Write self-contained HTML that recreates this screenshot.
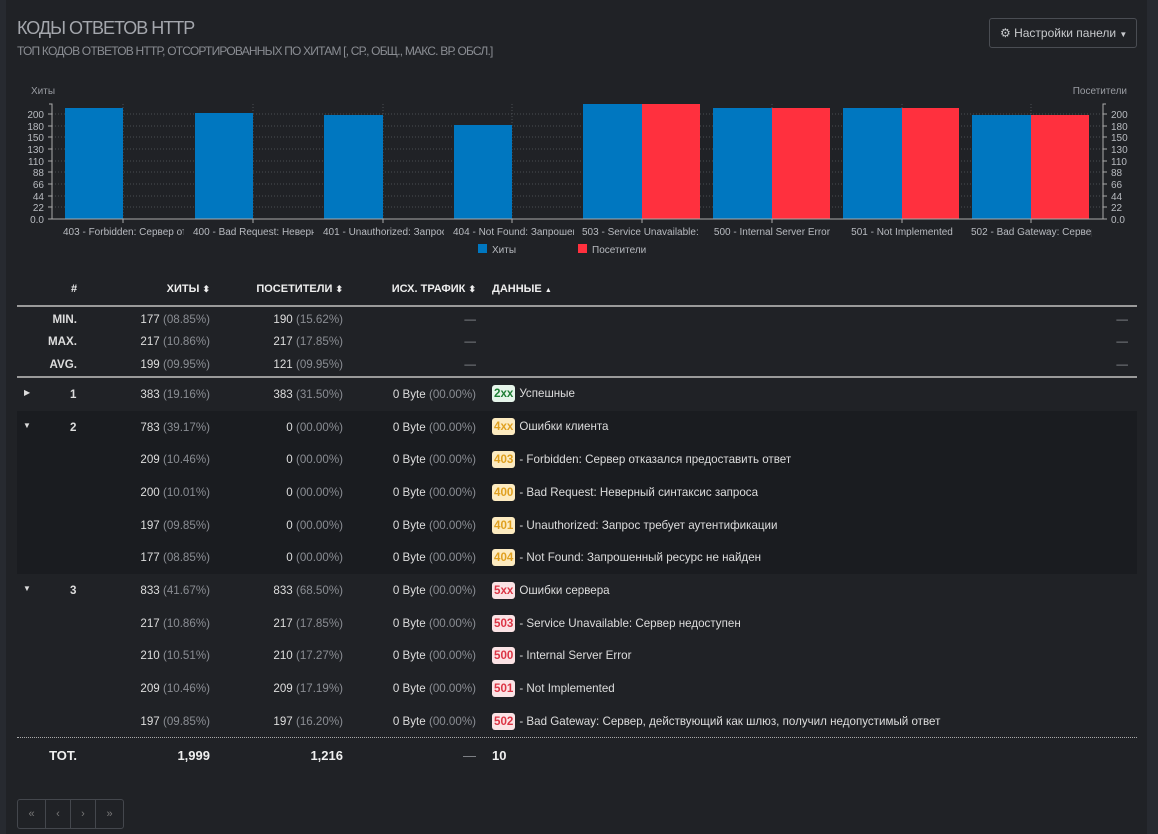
<!DOCTYPE html>
<html><head><meta charset="utf-8"><style>
*{margin:0;padding:0;box-sizing:border-box}
body{width:1158px;height:834px;background:#202226;font-family:"Liberation Sans",sans-serif;color:#ddd;position:relative;overflow:hidden;font-size:11.6px}
.a{position:absolute;white-space:nowrap}
.r{text-align:right}
.g{color:#8a8d93}
.b{font-weight:bold}
.badge{display:inline-block;padding:2px 2px;border-radius:3px;font-weight:bold;font-size:11.6px;line-height:13px;margin-right:4px}
.b2{background:#e6f5ea;color:#1e7e34}
.b4{background:#fdebc0;color:#e0a020}
.b5{background:#fbe3e5;color:#dc3545}
.d{margin-top:1px}
</style></head><body>
<div class="a" style="left:0;top:0;width:6px;height:834px;background:#272a30"></div>
<div class="a" style="left:1147px;top:0;width:11px;height:834px;background:#272a30"></div>
<div class="a" style="left:17px;top:18px;font-size:18px;color:#a4a7ad;letter-spacing:-1px">КОДЫ ОТВЕТОВ HTTP</div>
<div class="a" style="left:17px;top:44px;font-size:12px;color:#8a8d93;letter-spacing:-0.8px">ТОП КОДОВ ОТВЕТОВ HTTP, ОТСОРТИРОВАННЫХ ПО ХИТАМ [, СР., ОБЩ., МАКС. ВР. ОБСЛ.]</div>
<div class="a" style="left:989px;top:18px;width:148px;height:30px;border:1px solid #4a4d53;border-radius:3px;color:#c8cacd;font-size:12px;padding:7px 0 0 10px">&#9881; Настройки панели <span style="font-size:8px">&#9660;</span></div>
<svg class="a" style="left:0;top:0" width="1158" height="270" font-family="Liberation Sans" font-size="10">
<text x="31" y="94" fill="#9a9da3" font-size="10">Хиты</text>
<text x="1127" y="94" fill="#9a9da3" text-anchor="end">Посетители</text>
<g stroke="#4a4d53" stroke-dasharray="1,2">
<line x1="52" x2="1103" y1="114" y2="114"/><line x1="52" x2="1103" y1="126" y2="126"/><line x1="52" x2="1103" y1="137" y2="137"/><line x1="52" x2="1103" y1="149" y2="149"/><line x1="52" x2="1103" y1="161" y2="161"/><line x1="52" x2="1103" y1="172" y2="172"/><line x1="52" x2="1103" y1="184" y2="184"/><line x1="52" x2="1103" y1="196" y2="196"/><line x1="52" x2="1103" y1="207" y2="207"/>
<line x1="123" x2="123" y1="104" y2="219"/><line x1="253" x2="253" y1="104" y2="219"/><line x1="383" x2="383" y1="104" y2="219"/><line x1="512" x2="512" y1="104" y2="219"/><line x1="642" x2="642" y1="104" y2="219"/><line x1="772" x2="772" y1="104" y2="219"/><line x1="902" x2="902" y1="104" y2="219"/><line x1="1031" x2="1031" y1="104" y2="219"/>
</g>
<g fill="#0077c0">
<rect x="65" y="108" width="58" height="111"/><rect x="195" y="113" width="58" height="106"/><rect x="324" y="115" width="59" height="104"/><rect x="454" y="125" width="58" height="94"/>
<rect x="583" y="104" width="59" height="115"/><rect x="713" y="108" width="59" height="111"/><rect x="843" y="108" width="59" height="111"/><rect x="972" y="115" width="59" height="104"/>
</g>
<g fill="#ff303e">
<rect x="642" y="104" width="58" height="115"/><rect x="772" y="108" width="58" height="111"/><rect x="902" y="108" width="57" height="111"/><rect x="1031" y="115" width="58" height="104"/>
</g>
<g stroke="#aaa" fill="none"><path d="M49 104H52V219H1103V104H1106"/></g>
<g stroke="#aaa"><line x1="48" x2="52" y1="114" y2="114"/><line x1="48" x2="52" y1="126" y2="126"/><line x1="48" x2="52" y1="137" y2="137"/><line x1="48" x2="52" y1="149" y2="149"/><line x1="48" x2="52" y1="161" y2="161"/><line x1="48" x2="52" y1="172" y2="172"/><line x1="48" x2="52" y1="184" y2="184"/><line x1="48" x2="52" y1="196" y2="196"/><line x1="48" x2="52" y1="207" y2="207"/><line x1="48" x2="52" y1="219" y2="219"/>
<line x1="1103" x2="1107" y1="114" y2="114"/><line x1="1103" x2="1107" y1="126" y2="126"/><line x1="1103" x2="1107" y1="137" y2="137"/><line x1="1103" x2="1107" y1="149" y2="149"/><line x1="1103" x2="1107" y1="161" y2="161"/><line x1="1103" x2="1107" y1="172" y2="172"/><line x1="1103" x2="1107" y1="184" y2="184"/><line x1="1103" x2="1107" y1="196" y2="196"/><line x1="1103" x2="1107" y1="207" y2="207"/><line x1="1103" x2="1107" y1="219" y2="219"/>
<line x1="123" x2="123" y1="219" y2="223"/><line x1="253" x2="253" y1="219" y2="223"/><line x1="383" x2="383" y1="219" y2="223"/><line x1="512" x2="512" y1="219" y2="223"/><line x1="642" x2="642" y1="219" y2="223"/><line x1="772" x2="772" y1="219" y2="223"/><line x1="902" x2="902" y1="219" y2="223"/><line x1="1031" x2="1031" y1="219" y2="223"/></g>
<g fill="#b8bbc0" text-anchor="end"><text x="44" y="118">200</text><text x="44" y="130">180</text><text x="44" y="141">150</text><text x="44" y="153">130</text><text x="44" y="165">110</text><text x="44" y="176">88</text><text x="44" y="188">66</text><text x="44" y="200">44</text><text x="44" y="211">22</text><text x="44" y="223">0.0</text></g>
<g fill="#b8bbc0"><text x="1111" y="118">200</text><text x="1111" y="130">180</text><text x="1111" y="141">150</text><text x="1111" y="153">130</text><text x="1111" y="165">110</text><text x="1111" y="176">88</text><text x="1111" y="188">66</text><text x="1111" y="200">44</text><text x="1111" y="211">22</text><text x="1111" y="223">0.0</text></g>
<g fill="#b8bbc0">
<svg x="60" y="222" width="124" height="16"><text x="3" y="13">403 - Forbidden: Сервер отказался</text></svg>
<svg x="190" y="222" width="124" height="16"><text x="3" y="13">400 - Bad Request: Неверный</text></svg>
<svg x="320" y="222" width="124" height="16"><text x="3" y="13">401 - Unauthorized: Запрос</text></svg>
<svg x="450" y="222" width="124" height="16"><text x="3" y="13">404 - Not Found: Запрошенный</text></svg>
<svg x="579" y="222" width="121" height="16"><text x="3" y="13">503 - Service Unavailable: Сервер</text></svg>
<text x="772" y="235" text-anchor="middle">500 - Internal Server Error</text>
<text x="902" y="235" text-anchor="middle">501 - Not Implemented</text>
<svg x="968" y="222" width="124" height="16"><text x="3" y="13">502 - Bad Gateway: Сервер</text></svg>
</g>
<rect x="478" y="244" width="9" height="9" fill="#0077c0"/><text x="492" y="253" fill="#b8bbc0">Хиты</text>
<rect x="578" y="244" width="9" height="9" fill="#ff303e"/><text x="592" y="253" fill="#b8bbc0">Посетители</text>
</svg>

<div class="a" style="left:17px;top:411px;width:1120px;height:163px;background:#1a1c20"></div>
<div class="a" style="left:17px;top:305px;width:1120px;height:2px;background:#9a9a9a"></div>
<div class="a" style="left:17px;top:376px;width:1120px;height:2px;background:#9a9a9a"></div>
<div class="a" style="left:17px;top:737px;width:1120px;border-top:1px dotted #aaa"></div>

<div class="a b" style="left:71px;top:283px;color:#eee;font-size:11px">#</div>
<div class="a b r" style="left:100px;width:110px;top:283px;color:#eee;font-size:11px">ХИТЫ <span style="font-size:9px">&#11021;</span></div>
<div class="a b r" style="left:220px;width:123px;top:283px;color:#eee;font-size:11px">ПОСЕТИТЕЛИ <span style="font-size:9px">&#11021;</span></div>
<div class="a b r" style="left:360px;width:116px;top:283px;color:#eee;font-size:11px">ИСХ. ТРАФИК <span style="font-size:9px">&#11021;</span></div>
<div class="a b" style="left:492px;top:283px;color:#eee;font-size:11px">ДАННЫЕ <span style="font-size:7px">&#9650;</span></div>

<div class="a b r" style="left:20px;width:57px;top:313px">MIN.</div>
<div class="a r" style="left:100px;width:110px;top:313px">177 <span class="g">(08.85%)</span></div>
<div class="a r" style="left:220px;width:123px;top:313px">190 <span class="g">(15.62%)</span></div>
<div class="a r g" style="left:400px;width:76px;top:313px">—</div><div class="a r g" style="left:1100px;width:28px;top:313px">—</div>
<div class="a b r" style="left:20px;width:57px;top:335px">MAX.</div>
<div class="a r" style="left:100px;width:110px;top:335px">217 <span class="g">(10.86%)</span></div>
<div class="a r" style="left:220px;width:123px;top:335px">217 <span class="g">(17.85%)</span></div>
<div class="a r g" style="left:400px;width:76px;top:335px">—</div><div class="a r g" style="left:1100px;width:28px;top:335px">—</div>
<div class="a b r" style="left:20px;width:57px;top:358px">AVG.</div>
<div class="a r" style="left:100px;width:110px;top:358px">199 <span class="g">(09.95%)</span></div>
<div class="a r" style="left:220px;width:123px;top:358px">121 <span class="g">(09.95%)</span></div>
<div class="a r g" style="left:400px;width:76px;top:358px">—</div><div class="a r g" style="left:1100px;width:28px;top:358px">—</div>

<div class="a" style="left:24px;top:388px;font-size:8px">&#9654;</div>
<div class="a b" style="left:70px;top:388px">1</div>
<div class="a r" style="left:100px;width:110px;top:388px">383 <span class="g">(19.16%)</span></div>
<div class="a r" style="left:220px;width:123px;top:388px">383 <span class="g">(31.50%)</span></div>
<div class="a r" style="left:360px;width:116px;top:388px">0 Byte <span class="g">(00.00%)</span></div>
<div class="a" style="left:492px;top:385px"><span class="badge b2">2xx</span>Успешные</div>

<div class="a" style="left:23px;top:421px;font-size:8px">&#9660;</div>
<div class="a b" style="left:70px;top:421px">2</div>
<div class="a r" style="left:100px;width:110px;top:421px">783 <span class="g">(39.17%)</span></div>
<div class="a r" style="left:220px;width:123px;top:421px">0 <span class="g">(00.00%)</span></div>
<div class="a r" style="left:360px;width:116px;top:421px">0 Byte <span class="g">(00.00%)</span></div>
<div class="a" style="left:492px;top:418px"><span class="badge b4">4xx</span>Ошибки клиента</div>

<div class="a r" style="left:100px;width:110px;top:453px">209 <span class="g">(10.46%)</span></div>
<div class="a r" style="left:220px;width:123px;top:453px">0 <span class="g">(00.00%)</span></div>
<div class="a r" style="left:360px;width:116px;top:453px">0 Byte <span class="g">(00.00%)</span></div>
<div class="a" style="left:492px;top:451px"><span class="badge b4">403</span>- Forbidden: Сервер отказался предоставить ответ</div>
<div class="a r" style="left:100px;width:110px;top:486px">200 <span class="g">(10.01%)</span></div>
<div class="a r" style="left:220px;width:123px;top:486px">0 <span class="g">(00.00%)</span></div>
<div class="a r" style="left:360px;width:116px;top:486px">0 Byte <span class="g">(00.00%)</span></div>
<div class="a" style="left:492px;top:484px"><span class="badge b4">400</span>- Bad Request: Неверный синтаксис запроса</div>
<div class="a r" style="left:100px;width:110px;top:519px">197 <span class="g">(09.85%)</span></div>
<div class="a r" style="left:220px;width:123px;top:519px">0 <span class="g">(00.00%)</span></div>
<div class="a r" style="left:360px;width:116px;top:519px">0 Byte <span class="g">(00.00%)</span></div>
<div class="a" style="left:492px;top:517px"><span class="badge b4">401</span>- Unauthorized: Запрос требует аутентификации</div>
<div class="a r" style="left:100px;width:110px;top:551px">177 <span class="g">(08.85%)</span></div>
<div class="a r" style="left:220px;width:123px;top:551px">0 <span class="g">(00.00%)</span></div>
<div class="a r" style="left:360px;width:116px;top:551px">0 Byte <span class="g">(00.00%)</span></div>
<div class="a" style="left:492px;top:549px"><span class="badge b4">404</span>- Not Found: Запрошенный ресурс не найден</div>

<div class="a" style="left:23px;top:584px;font-size:8px">&#9660;</div>
<div class="a b" style="left:70px;top:584px">3</div>
<div class="a r" style="left:100px;width:110px;top:584px">833 <span class="g">(41.67%)</span></div>
<div class="a r" style="left:220px;width:123px;top:584px">833 <span class="g">(68.50%)</span></div>
<div class="a r" style="left:360px;width:116px;top:584px">0 Byte <span class="g">(00.00%)</span></div>
<div class="a" style="left:492px;top:582px"><span class="badge b5">5xx</span>Ошибки сервера</div>

<div class="a r" style="left:100px;width:110px;top:617px">217 <span class="g">(10.86%)</span></div>
<div class="a r" style="left:220px;width:123px;top:617px">217 <span class="g">(17.85%)</span></div>
<div class="a r" style="left:360px;width:116px;top:617px">0 Byte <span class="g">(00.00%)</span></div>
<div class="a" style="left:492px;top:615px"><span class="badge b5">503</span>- Service Unavailable: Сервер недоступен</div>
<div class="a r" style="left:100px;width:110px;top:649px">210 <span class="g">(10.51%)</span></div>
<div class="a r" style="left:220px;width:123px;top:649px">210 <span class="g">(17.27%)</span></div>
<div class="a r" style="left:360px;width:116px;top:649px">0 Byte <span class="g">(00.00%)</span></div>
<div class="a" style="left:492px;top:647px"><span class="badge b5">500</span>- Internal Server Error</div>
<div class="a r" style="left:100px;width:110px;top:682px">209 <span class="g">(10.46%)</span></div>
<div class="a r" style="left:220px;width:123px;top:682px">209 <span class="g">(17.19%)</span></div>
<div class="a r" style="left:360px;width:116px;top:682px">0 Byte <span class="g">(00.00%)</span></div>
<div class="a" style="left:492px;top:680px"><span class="badge b5">501</span>- Not Implemented</div>
<div class="a r" style="left:100px;width:110px;top:715px">197 <span class="g">(09.85%)</span></div>
<div class="a r" style="left:220px;width:123px;top:715px">197 <span class="g">(16.20%)</span></div>
<div class="a r" style="left:360px;width:116px;top:715px">0 Byte <span class="g">(00.00%)</span></div>
<div class="a" style="left:492px;top:713px"><span class="badge b5">502</span>- Bad Gateway: Сервер, действующий как шлюз, получил недопустимый ответ</div>

<div class="a b r" style="left:20px;width:57px;top:748px;font-size:13px;color:#f0f0f0">TOT.</div>
<div class="a b r" style="left:100px;width:110px;top:748px;font-size:13px;color:#f0f0f0">1,999</div>
<div class="a b r" style="left:220px;width:123px;top:748px;font-size:13px;color:#f0f0f0">1,216</div>
<div class="a r g" style="left:400px;width:76px;top:748px;font-size:13px">—</div>
<div class="a b" style="left:492px;top:748px;font-size:13px;color:#f0f0f0">10</div>

<div class="a" style="left:17px;top:799px;width:107px;height:30px;border:1px solid #44474d;border-radius:3px;display:flex;color:#777;font-size:11px">
<div style="width:28px;border-right:1px solid #44474d;text-align:center;line-height:28px">&laquo;</div>
<div style="width:25px;border-right:1px solid #44474d;text-align:center;line-height:28px">&lsaquo;</div>
<div style="width:25px;border-right:1px solid #44474d;text-align:center;line-height:28px">&rsaquo;</div>
<div style="width:27px;text-align:center;line-height:28px">&raquo;</div>
</div>
</body></html>
